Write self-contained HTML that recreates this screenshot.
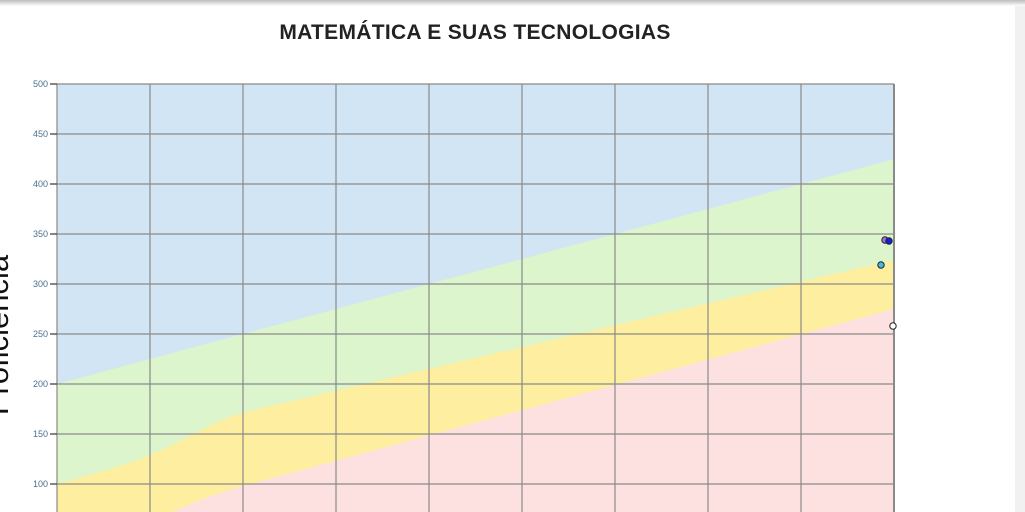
<!DOCTYPE html>
<html><head><meta charset="utf-8"><style>
html,body{margin:0;padding:0;width:1025px;height:512px;overflow:hidden;background:#fff;font-family:"Liberation Sans",sans-serif}
</style></head><body>
<div style="position:absolute;left:0;top:0;width:1025px;height:6px;background:linear-gradient(#bdbdbd,#fff)"></div>
<div style="position:absolute;left:1015px;top:6px;width:10px;height:506px;background:#f1f1f1"></div>
<div style="position:absolute;left:0;top:21px;width:950px;text-align:center;font-size:21px;font-weight:bold;color:#222;letter-spacing:0.3px">MATEMÁTICA E SUAS TECNOLOGIAS</div>
<svg width="1015" height="512" style="position:absolute;left:0;top:0">
<rect x="57" y="84" width="837" height="430" fill="#d2e5f4"/>
<polygon points="57,384 894,159 894,520 57,520" fill="#dcf5cc"/>
<path d="M57,484 C100,472 120,467 150,455 C190,438 215,420 243,413 C280,403 300,400 330,392 L894,260 L894,520 L57,520Z" fill="#fdeea0"/>
<path d="M172,512 C200,500 220,492 243,486 L894,309 L894,520 L172,520Z" fill="#fde1e1"/>
<g stroke="#8a8a8a" stroke-width="1.2">
<line x1="57" y1="84" x2="894" y2="84"/><line x1="57" y1="134" x2="894" y2="134"/><line x1="57" y1="184" x2="894" y2="184"/><line x1="57" y1="234" x2="894" y2="234"/><line x1="57" y1="284" x2="894" y2="284"/><line x1="57" y1="334" x2="894" y2="334"/><line x1="57" y1="384" x2="894" y2="384"/><line x1="57" y1="434" x2="894" y2="434"/><line x1="57" y1="484" x2="894" y2="484"/>
<line x1="57" y1="84" x2="57" y2="512"/><line x1="150" y1="84" x2="150" y2="512"/><line x1="243" y1="84" x2="243" y2="512"/><line x1="336" y1="84" x2="336" y2="512"/><line x1="429" y1="84" x2="429" y2="512"/><line x1="522" y1="84" x2="522" y2="512"/><line x1="615" y1="84" x2="615" y2="512"/><line x1="708" y1="84" x2="708" y2="512"/><line x1="801" y1="84" x2="801" y2="512"/><line x1="894" y1="84" x2="894" y2="512" stroke-width="2"/>
</g>
<g stroke="#333" stroke-width="1.2">
<line x1="50" y1="84" x2="57" y2="84"/><line x1="50" y1="134" x2="57" y2="134"/><line x1="50" y1="184" x2="57" y2="184"/><line x1="50" y1="234" x2="57" y2="234"/><line x1="50" y1="284" x2="57" y2="284"/><line x1="50" y1="334" x2="57" y2="334"/><line x1="50" y1="384" x2="57" y2="384"/><line x1="50" y1="434" x2="57" y2="434"/><line x1="50" y1="484" x2="57" y2="484"/>
</g>
<g font-size="9" fill="#4a6f8a" text-anchor="end" font-family="Liberation Sans,sans-serif">
<text x="48" y="87">500</text><text x="48" y="137">450</text><text x="48" y="187">400</text><text x="48" y="237">350</text><text x="48" y="287">300</text><text x="48" y="337">250</text><text x="48" y="387">200</text><text x="48" y="437">150</text><text x="48" y="487">100</text>
</g>
<text transform="translate(8,335) rotate(-90)" text-anchor="middle" font-size="31" fill="#111" font-family="Liberation Sans,sans-serif">Proficiência</text>
<g stroke="#222" stroke-width="1">
<circle cx="885" cy="240" r="3.2" fill="#a070e0"/>
<circle cx="889" cy="241" r="3.2" fill="#1020e0"/>
<circle cx="881" cy="265" r="3.2" fill="#40b8e8"/>
<circle cx="893" cy="326" r="3.2" fill="#fff"/>
</g>
</svg>
</body></html>
